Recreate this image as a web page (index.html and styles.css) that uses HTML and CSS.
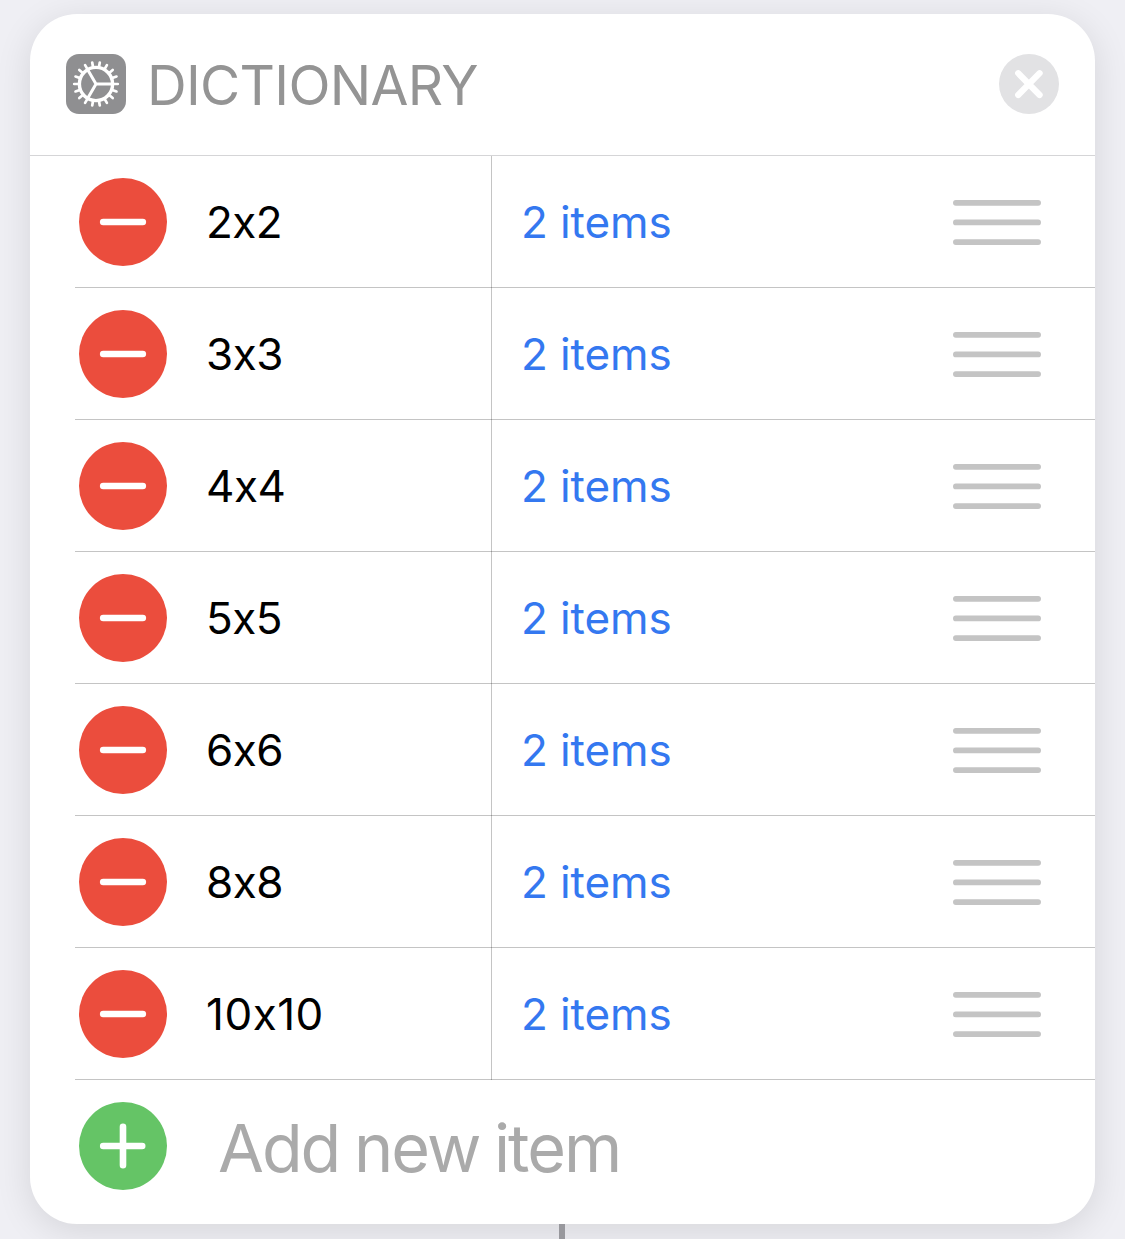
FILE: index.html
```html
<!DOCTYPE html>
<html lang="en">
<head>
<meta charset="utf-8">
<title>Dictionary</title>
<link rel="stylesheet" href="styles.css">
</head>
<body>
<svg width="0" height="0" class="defs" aria-hidden="true">
  <symbol id="minus" viewBox="0 0 88 88"><circle class="red" cx="44" cy="44" r="44"/><path class="sign" d="M24.2 44H63.8"/></symbol>
  <symbol id="plus" viewBox="0 0 88 88"><circle class="green" cx="44" cy="44" r="44"/><path class="sign" d="M24.2 44H63.2M44 24.8V63.2"/></symbol>
  <symbol id="grip" viewBox="0 0 88 46"><path class="bars" d="M2.9 3.8H85.1M2.9 23.4H85.1M2.9 43.1H85.1"/></symbol>
</svg>
<main class="card">
  <header class="header">
    <svg class="app" viewBox="0 0 60 60">
      <rect class="tile" width="60" height="60" rx="13"/>
      <g transform="translate(30 30)">
        <circle class="ring" r="16.6"/>
        <path class="teeth" id="teeth" d="M18 0H21.8M-18 0H-21.8M9 15.59L10.9 18.88M-9 15.59L-10.9 18.88M9 -15.59L10.9 -18.88M-9 -15.59L-10.9 -18.88"/>
        <use href="#teeth" transform="rotate(20)"/>
        <use href="#teeth" transform="rotate(40)"/>
        <path class="spokes" d="M0 0H16M0 0L-8 -13.86M0 0L-8 13.86"/>
      </g>
    </svg>
    <h1 class="title">DICTIONARY</h1>
    <svg class="close" viewBox="0 0 60 60"><circle class="disc" cx="30" cy="30" r="30"/><path class="cross" d="M19.2 19.2L40.6 41M40.6 19.2L19.2 41"/></svg>
  </header>
  <div class="row"><div class="key"><svg class="button"><use href="#minus"/></svg><span class="text">2x2</span></div><div class="value"><span class="text">2 items</span><svg class="grip"><use href="#grip"/></svg></div></div>
  <div class="row"><div class="key"><svg class="button"><use href="#minus"/></svg><span class="text">3x3</span></div><div class="value"><span class="text">2 items</span><svg class="grip"><use href="#grip"/></svg></div></div>
  <div class="row"><div class="key"><svg class="button"><use href="#minus"/></svg><span class="text">4x4</span></div><div class="value"><span class="text">2 items</span><svg class="grip"><use href="#grip"/></svg></div></div>
  <div class="row"><div class="key"><svg class="button"><use href="#minus"/></svg><span class="text">5x5</span></div><div class="value"><span class="text">2 items</span><svg class="grip"><use href="#grip"/></svg></div></div>
  <div class="row"><div class="key"><svg class="button"><use href="#minus"/></svg><span class="text">6x6</span></div><div class="value"><span class="text">2 items</span><svg class="grip"><use href="#grip"/></svg></div></div>
  <div class="row"><div class="key"><svg class="button"><use href="#minus"/></svg><span class="text">8x8</span></div><div class="value"><span class="text">2 items</span><svg class="grip"><use href="#grip"/></svg></div></div>
  <div class="row"><div class="key"><svg class="button"><use href="#minus"/></svg><span class="text wide">10x10</span></div><div class="value"><span class="text">2 items</span><svg class="grip"><use href="#grip"/></svg></div></div>
  <div class="add"><svg class="button"><use href="#plus"/></svg><span class="add-text">Add new item</span></div>
</main>
<div class="connector"></div>
</body>
</html>
```
FILE: styles.css
```css
* { box-sizing: border-box; }
body {
  margin: 0;
  height: 1239px;
  padding: 14px 30px 0;
  overflow: hidden;
  background: #efeff4;
  font-family: Inter, "Liberation Sans", sans-serif;
}
.defs { position: absolute; }
.card {
  height: 1210px;
  border-radius: 47px;
  background: #fff;
  box-shadow: 0 7px 36px rgba(0, 0, 0, .11);
}
.header {
  display: flex;
  align-items: center;
  height: 142px;
  padding: 0 36px 1px;
  border-bottom: 1px solid #d5d5d7;
}
.app, .close { width: 60px; height: 60px; flex: none; }
.tile { fill: #8f8f91; }
.ring { fill: none; stroke: #fff; stroke-width: 3.4; }
.teeth { fill: none; stroke: #fff; stroke-width: 2.7; stroke-linecap: round; }
.spokes { fill: none; stroke: #fff; stroke-width: 3; }
.title {
  flex: 1;
  margin: 2px 0 0 21px;
  font-size: 55px;
  font-weight: 400;
  letter-spacing: -.7px;
  line-height: 66px;
  color: #949494;
}
.disc { fill: #e2e2e4; }
.cross { stroke: #fff; stroke-width: 6.2; stroke-linecap: round; }
.row {
  display: flex;
  height: 132px;
  margin-left: 45px;
  box-shadow: inset 0 -1px rgba(0, 0, 0, .23);
}
.key {
  display: flex;
  align-items: center;
  gap: 39px;
  width: 417px;
  padding-left: 4px;
  border-right: 1px solid rgba(0, 0, 0, .23);
}
.value {
  display: flex;
  flex: 1;
  align-items: center;
  justify-content: space-between;
  padding: 0 54px 0 29px;
  color: #3478f0;
}
.text { font-size: 44px; line-height: 54px; letter-spacing: -.1px; }
.key .text { color: #000; letter-spacing: -.5px; }
.key .wide { letter-spacing: .5px; }
.button { width: 88px; height: 88px; flex: none; }
.red { fill: #eb4d3d; }
.green { fill: #65c466; }
.sign { stroke: #fff; stroke-width: 6.6; stroke-linecap: round; }
.grip { width: 88px; height: 46px; }
.bars { stroke: #c4c4c4; stroke-width: 5.8; stroke-linecap: round; }
.add {
  display: flex;
  align-items: center;
  height: 132px;
  padding-left: 49px;
  gap: 51px;
}
.add-text { font-size: 66.5px; line-height: 80px; letter-spacing: -2px; word-spacing: -2px; color: #aaa; margin-top: 4px; }
.connector { width: 6px; height: 15px; margin-left: 529px; background: #98989d; }
```
